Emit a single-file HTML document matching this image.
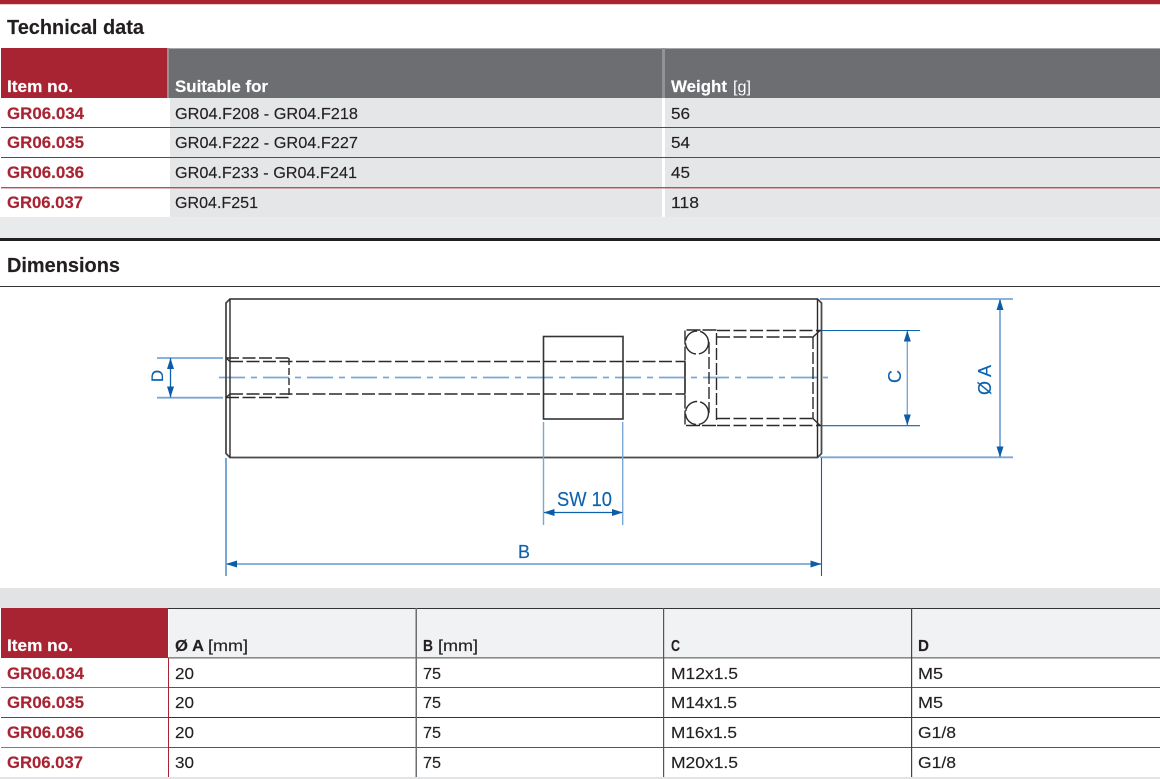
<!DOCTYPE html>
<html><head><meta charset="utf-8"><style>
html,body{margin:0;padding:0;background:#fff;width:1160px;height:779px;overflow:hidden}
svg{display:block}
text{font-family:"Liberation Sans",sans-serif;font-size:16px;fill:#231f20;stroke:#231f20;stroke-width:.15px}
.b{font-weight:bold}
.r{font-weight:bold;fill:#a82433;stroke:#a82433;font-size:16.5px}
.w{font-weight:bold;fill:#fff;stroke:#fff;font-size:16.5px}
.bl{fill:#0d62ad;stroke:#0d62ad;font-size:20px}
.d{fill:none;stroke:#2b2a2b;stroke-width:1.4}
.da{stroke-dasharray:13 3.5}
.lb{stroke:#7aa7d6;stroke-width:1.8;fill:none}
.db{stroke:#0d62ad;stroke-width:1.1;fill:none}
.ar{fill:#0d5ca8}
</style></head><body>
<svg width="1160" height="779" viewBox="0 0 1160 779" xmlns="http://www.w3.org/2000/svg">
<!-- top -->
<rect x="0" y="0" width="1160" height="4" fill="#a82433"/>
<rect x="0" y="4" width="1160" height="1" fill="#eec9cd"/>
<text x="7" y="34" class="b" style="font-size:20px" textLength="137" lengthAdjust="spacingAndGlyphs">Technical data</text>

<!-- table 1 -->
<rect x="1" y="48" width="166" height="50" fill="#a82433"/>
<rect x="169" y="48" width="991" height="50" fill="#6d6e71"/>
<rect x="169" y="48" width="991" height="1" fill="#a5a6a8"/>
<rect x="167" y="48" width="2" height="50" fill="#929395"/>
<rect x="662" y="48" width="3" height="50" fill="#929395"/>
<rect x="170" y="98" width="990" height="119" fill="#e5e6e8"/>
<rect x="662" y="98" width="3" height="119" fill="#fff"/>
<rect x="1" y="127" width="1159" height="1" fill="#a82433"/>
<rect x="1" y="157" width="1159" height="1" fill="#a82433"/>
<rect x="1" y="187" width="1159" height="1.4" fill="#b5505c"/>
<rect x="0" y="217" width="1160" height="21" fill="#e9eaec"/>
<rect x="0" y="238" width="1160" height="3" fill="#231f20"/>
<text x="7" y="92" class="w" textLength="66" lengthAdjust="spacingAndGlyphs">Item no.</text>
<text x="175" y="92" class="w" textLength="93" lengthAdjust="spacingAndGlyphs">Suitable for</text>
<text x="671" y="92" class="w" textLength="56" lengthAdjust="spacingAndGlyphs">Weight</text>
<text x="733" y="92" style="fill:#fff;stroke:none" textLength="18" lengthAdjust="spacingAndGlyphs">[g]</text>
<text x="7" y="119" class="r" textLength="77" lengthAdjust="spacingAndGlyphs">GR06.034</text>
<text x="7" y="148" class="r" textLength="77" lengthAdjust="spacingAndGlyphs">GR06.035</text>
<text x="7" y="178" class="r" textLength="77" lengthAdjust="spacingAndGlyphs">GR06.036</text>
<text x="7" y="208" class="r" textLength="76" lengthAdjust="spacingAndGlyphs">GR06.037</text>
<text x="175" y="119" textLength="183" lengthAdjust="spacingAndGlyphs">GR04.F208 - GR04.F218</text>
<text x="175" y="148" textLength="183" lengthAdjust="spacingAndGlyphs">GR04.F222 - GR04.F227</text>
<text x="175" y="178" textLength="182" lengthAdjust="spacingAndGlyphs">GR04.F233 - GR04.F241</text>
<text x="175" y="208" textLength="83" lengthAdjust="spacingAndGlyphs">GR04.F251</text>
<text x="671" y="119" textLength="19" lengthAdjust="spacingAndGlyphs">56</text>
<text x="671" y="148" textLength="19" lengthAdjust="spacingAndGlyphs">54</text>
<text x="671" y="178" textLength="19" lengthAdjust="spacingAndGlyphs">45</text>
<text x="671" y="208" textLength="28" lengthAdjust="spacingAndGlyphs">118</text>

<!-- Dimensions -->
<text x="7" y="272" class="b" style="font-size:20px" textLength="113" lengthAdjust="spacingAndGlyphs">Dimensions</text>
<rect x="0" y="286" width="1160" height="1" fill="#333"/>

<!-- drawing: centre line -->
<path d="M219 377.5H828" class="lb" stroke-dasharray="26 6 6 6"/>
<!-- body -->
<path d="M230 299H817.5L821.5 303V453.5L817.5 457.5H230L226 453.5V303Z" fill="none" stroke="#4a4a4a" stroke-width="1.8"/>
<path d="M230 299V457.5M817.5 299V457.5" class="d"/>
<!-- left thread -->
<path d="M226 358H289M226 397.5H289" class="d da"/>
<path d="M289 358V397.5" class="d" stroke-dasharray="7 3"/>
<path d="M230 361.5H685M230 394H685" class="d da"/>
<path d="M226 358L230 361.5M226 397.5L230 394" class="d"/>
<!-- hex -->
<rect x="543.5" y="336.5" width="79.5" height="82.5" fill="none" stroke="#333" stroke-width="1.6"/>
<!-- groove -->
<path d="M685 361V394" class="d"/>
<path d="M716.5 330H685V425.5H716.5" class="d" stroke-dasharray="14 2"/>
<path d="M709 342V413" class="d" stroke-dasharray="12 3"/>
<path d="M716.5 333V423" class="d" stroke-dasharray="12 3"/>
<circle cx="697" cy="342.5" r="11.5" class="d" stroke-dasharray="16 3"/>
<circle cx="697" cy="413" r="11.5" class="d" stroke-dasharray="16 3"/>
<path d="M717 330.5H821M717 425.5H821" class="d da"/>
<path d="M717 337H813M717 418.5H813" class="d da"/>
<path d="M813 337V418.5" class="d" stroke-dasharray="12 3"/>
<path d="M813 337L820 330.5M813 418.5L820 425.5" class="d"/>

<!-- D dim -->
<path d="M157 358H223M157 397.7H223" class="lb"/>
<path d="M170.5 358V397.5" class="db" style="stroke-width:1.3"/>
<path class="ar" d="M170.5 358L174 369H167ZM170.5 397.5L174 386.5H167Z"/>
<text transform="translate(163,376) rotate(-90)" text-anchor="middle" class="bl" style="font-size:17px">D</text>
<!-- C dim -->
<path d="M822 330.5H920M822 425.7H920" class="db"/>
<path d="M907.3 331V425" class="lb" style="stroke-width:1.4"/>
<path class="ar" d="M907.3 330.5L910.8 341.5H903.8ZM907.3 425.5L910.8 414.5H903.8Z"/>
<text transform="translate(901,376.5) rotate(-90)" text-anchor="middle" class="bl" style="font-size:18px">C</text>
<!-- A dim -->
<path d="M820 299H1013M820 457.3H1013" class="lb"/>
<path d="M1000 299V457" class="lb"/>
<path class="ar" d="M1000 299L1003.5 310H996.5ZM1000 457.5L1003.5 446.5H996.5Z"/>
<text transform="translate(991,380) rotate(-90)" text-anchor="middle" class="bl" style="font-size:18px">Ø A</text>
<!-- SW dim -->
<path d="M543.5 422V525M622.7 422V525" class="lb" style="stroke-width:1.4"/>
<path d="M544 512.5H622" class="db" style="stroke-width:1.3"/>
<path class="ar" d="M543.5 512.5L554.5 509V516ZM623 512.5L612 509V516Z"/>
<text x="557" y="506" class="bl" textLength="55" lengthAdjust="spacingAndGlyphs">SW 10</text>
<!-- B dim -->
<path d="M226 458V576M821.5 458V576" class="db"/>
<path d="M226 564H821" class="lb"/>
<path class="ar" d="M226 564L237 560.5V567.5ZM821.5 564L810.5 560.5V567.5Z"/>
<text x="518" y="558" class="bl" style="font-size:18px" textLength="12" lengthAdjust="spacingAndGlyphs">B</text>

<!-- band -->
<rect x="0" y="588" width="1160" height="20" fill="#e2e3e5"/>

<!-- table 2 -->
<rect x="169" y="608" width="991" height="50" fill="#f1f2f4"/>
<rect x="1" y="608" width="167" height="50" fill="#a82433"/>
<rect x="168" y="608" width="992" height="1" fill="#333"/>
<rect x="168" y="657" width="992" height="1.6" fill="#8a8b8d"/>
<rect x="168" y="687" width="992" height="1" fill="#555"/>
<rect x="168" y="717" width="992" height="1" fill="#333"/>
<rect x="168" y="747" width="992" height="1" fill="#555"/>
<rect x="1" y="687" width="167" height="1" fill="#bd5e69"/>
<rect x="1" y="717" width="167" height="1" fill="#a82433"/>
<rect x="1" y="747" width="167" height="1" fill="#bd5e69"/>
<rect x="168" y="658" width="1" height="119" fill="#a82433"/>
<rect x="415.5" y="608" width="1.5" height="169" fill="#6d6e71"/>
<rect x="663" y="608" width="1.2" height="169" fill="#555"/>
<rect x="911" y="608" width="1.2" height="169" fill="#444"/>
<rect x="0" y="777" width="1160" height="2" fill="#e2e3e5"/>
<text x="7" y="651" class="w" textLength="66" lengthAdjust="spacingAndGlyphs">Item no.</text>
<text x="175" y="651" class="b" textLength="29" lengthAdjust="spacingAndGlyphs">Ø A</text>
<text x="208" y="651" textLength="40" lengthAdjust="spacingAndGlyphs">[mm]</text>
<text x="423" y="651" class="b" textLength="10" lengthAdjust="spacingAndGlyphs">B</text>
<text x="438" y="651" textLength="40" lengthAdjust="spacingAndGlyphs">[mm]</text>
<text x="671" y="651" class="b" textLength="9" lengthAdjust="spacingAndGlyphs">C</text>
<text x="918" y="651" class="b" textLength="11" lengthAdjust="spacingAndGlyphs">D</text>

<text x="7" y="679" class="r" textLength="77" lengthAdjust="spacingAndGlyphs">GR06.034</text>
<text x="7" y="708" class="r" textLength="77" lengthAdjust="spacingAndGlyphs">GR06.035</text>
<text x="7" y="738" class="r" textLength="77" lengthAdjust="spacingAndGlyphs">GR06.036</text>
<text x="7" y="768" class="r" textLength="76" lengthAdjust="spacingAndGlyphs">GR06.037</text>

<text x="175" y="679" textLength="19" lengthAdjust="spacingAndGlyphs">20</text>
<text x="175" y="708" textLength="19" lengthAdjust="spacingAndGlyphs">20</text>
<text x="175" y="738" textLength="19" lengthAdjust="spacingAndGlyphs">20</text>
<text x="175" y="768" textLength="19" lengthAdjust="spacingAndGlyphs">30</text>
<text x="423" y="679" textLength="18" lengthAdjust="spacingAndGlyphs">75</text>
<text x="423" y="708" textLength="18" lengthAdjust="spacingAndGlyphs">75</text>
<text x="423" y="738" textLength="18" lengthAdjust="spacingAndGlyphs">75</text>
<text x="423" y="768" textLength="18" lengthAdjust="spacingAndGlyphs">75</text>
<text x="671" y="679" textLength="67" lengthAdjust="spacingAndGlyphs">M12x1.5</text>
<text x="671" y="708" textLength="66" lengthAdjust="spacingAndGlyphs">M14x1.5</text>
<text x="671" y="738" textLength="66" lengthAdjust="spacingAndGlyphs">M16x1.5</text>
<text x="671" y="768" textLength="67" lengthAdjust="spacingAndGlyphs">M20x1.5</text>
<text x="918" y="679" textLength="25" lengthAdjust="spacingAndGlyphs">M5</text>
<text x="918" y="708" textLength="25" lengthAdjust="spacingAndGlyphs">M5</text>
<text x="918" y="738" textLength="38" lengthAdjust="spacingAndGlyphs">G1/8</text>
<text x="918" y="768" textLength="38" lengthAdjust="spacingAndGlyphs">G1/8</text>
</svg>
</body></html>
